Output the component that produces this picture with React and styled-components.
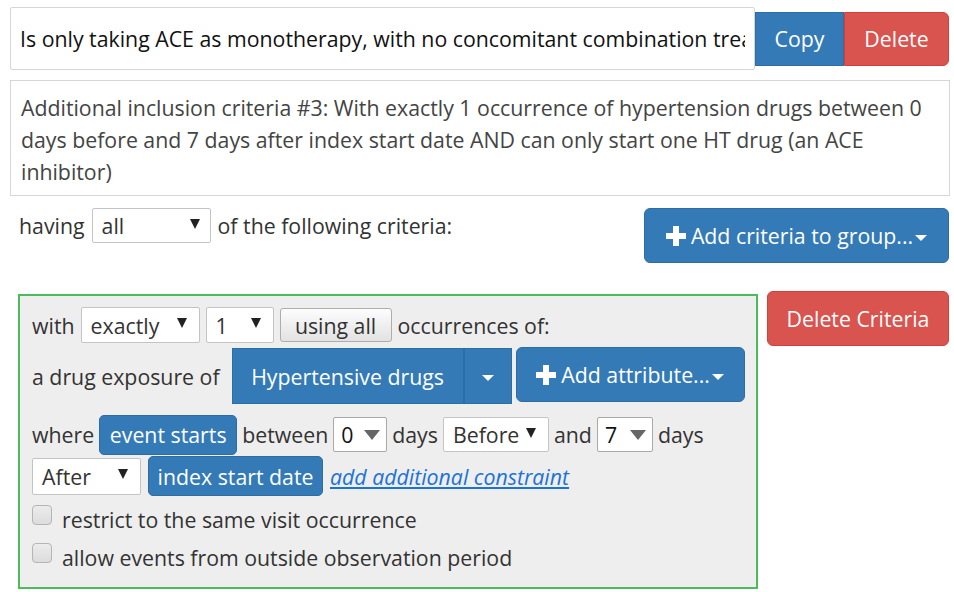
import React from 'react';
import styled, { createGlobalStyle, css } from 'styled-components';

const GlobalStyle = createGlobalStyle`
  body {
    margin: 0;
    background: #fff;
    font-family: 'Open Sans', 'Noto Sans', sans-serif;
    font-size: 21.3px;
    color: #333;
  }
`;

const Page = styled.div`
  width: 940px;
  padding: 7px 0 0 10px;
`;

const TitleRow = styled.div`
  display: flex;
  align-items: center;
`;

const TitleInput = styled.input`
  width: 745px;
  height: 63px;
  box-sizing: border-box;
  border: 1px solid #d6d6d6;
  border-radius: 2px;
  padding: 0 9px;
  margin: 0;
  font: inherit;
  color: #111;
  background: #fff;
  outline: none;
`;

const BtnGroup = styled.div`
  display: flex;
  height: 54px;
`;

const colors = {
  blue: css`
    background: #337ab7;
    border: 1px solid #2e6da4;
    color: #fff;
  `,
  red: css`
    background: #d9534f;
    border: 1px solid #d43f3a;
    color: #fff;
  `,
  plain: css`
    background: linear-gradient(#fdfdfd, #e2e2e2);
    border: 1px solid #adadad;
    color: #333;
  `,
};

const Button = styled.div`
  ${p => colors[p.$kind || 'blue']};
  box-sizing: border-box;
  flex-shrink: 0;
  display: inline-flex;
  align-items: center;
  justify-content: center;
  white-space: nowrap;
  height: ${p => p.$h || 54}px;
  width: ${p => (p.$w ? `${p.$w}px` : 'auto')};
  padding: 0 ${p => p.$px ?? 8}px;
  border-radius: ${p => p.$radius || '6px'};
`;

const DescBox = styled.div`
  margin-top: 10px;
  width: 940px;
  height: 116px;
  box-sizing: border-box;
  border: 1px solid #d6d6d6;
  padding: 11px 10px;
  line-height: 32px;
  color: #444;
`;

const HavingRow = styled.div`
  margin-top: 12px;
  display: flex;
  justify-content: space-between;
  align-items: flex-start;
`;

const Inline = styled.div`
  display: flex;
  align-items: center;
  white-space: nowrap;
  gap: ${p => p.$gap ?? 6}px;
  height: ${p => p.$h || 'auto'};
  margin-top: ${p => p.$mt || 0}px;
  margin-left: ${p => p.$ml || 0}px;

  & > span {
    flex-shrink: 0;
  }
`;

const Select = styled.div`
  box-sizing: border-box;
  flex-shrink: 0;
  width: ${p => p.$w}px;
  height: ${p => p.$h || 36}px;
  background: #fff;
  border: 1px solid ${p => (p.$grey ? '#a9a9a9' : '#c4c4c4')};
  border-radius: 2px;
  display: flex;
  align-items: center;
  justify-content: space-between;
  padding: 0 ${p => p.$pr ?? 14}px 0 ${p => p.$pl ?? 9}px;
  color: ${p => (p.$grey ? '#111' : '#333')};
`;

const BlackArrow = styled.span`
  width: 0;
  height: 0;
  border-left: 5px solid transparent;
  border-right: 5px solid transparent;
  border-top: 10px solid #222;
  margin-top: -4px;
`;

const GreyArrow = styled.span`
  width: 0;
  height: 0;
  border-left: 8px solid transparent;
  border-right: 8px solid transparent;
  border-top: 10px solid #666;
`;

const Caret = styled.span`
  display: inline-block;
  width: 0;
  height: 0;
  border-left: 6px solid transparent;
  border-right: 6px solid transparent;
  border-top: 6px solid #fff;
  margin-left: ${p => p.$ml ?? 2}px;
  margin-top: 4px;
`;

const CriteriaRow = styled.div`
  margin-top: 28px;
  display: flex;
  align-items: flex-start;
  gap: 9px;
`;

const GreenBox = styled.div`
  margin-left: 8px;
  margin-top: 3px;
  width: 740px;
  height: 295px;
  box-sizing: border-box;
  border: 2px solid #4cbb5c;
  background: #eee;
  padding: 10px 12px;
`;

const SplitBtn = styled.div`
  display: flex;
  flex-shrink: 0;
  height: 56px;
  margin-left: 8px;
`;

const Link = styled.a`
  color: #1a73d9;
  font-style: italic;
  text-decoration: underline;
`;

const CheckRow = styled.label`
  display: flex;
  align-items: flex-start;
  gap: 10px;
  height: 38px;
`;

const Check = styled.span`
  width: 20px;
  height: 20px;
  box-sizing: border-box;
  border: 1px solid #b5b5b5;
  border-radius: 4px;
  background: linear-gradient(#ececec, #dcdcdc);
`;

const CheckText = styled.span`
  margin-top: 2px;
  line-height: 26px;
`;

const Plus = () => (
  <svg width="20" height="20" viewBox="0 0 20 20" style={{ marginRight: 5 }}>
    <path d="M7 0h6v7h7v6h-7v7H7v-7H0V7h7z" fill="#fff" />
  </svg>
);

export default function App() {
  return (
    <Page>
      <GlobalStyle />
      <TitleRow>
        <TitleInput
          readOnly
          value="Is only taking ACE as monotherapy, with no concomitant combination treatment"
        />
        <BtnGroup>
          <Button $w={89} $radius="0">Copy</Button>
          <Button $kind="red" $w={105} $radius="0 6px 6px 0">Delete</Button>
        </BtnGroup>
      </TitleRow>

      <DescBox>
        Additional inclusion criteria #3: With exactly 1 occurrence of hypertension drugs between 0
        days before and 7 days after index start date AND can only start one HT drug (an ACE
        inhibitor)
      </DescBox>

      <HavingRow>
        <Inline $h="35px" $gap={7} $ml={9}>
          <span>having</span>
          <Select $w={119} $h={35} $pr={10}>all<BlackArrow /></Select>
          <span>of the following criteria:</span>
        </Inline>
        <Button $w={305} $h={55} style={{ marginRight: 1 }}>
          <Plus />Add criteria to group...<Caret />
        </Button>
      </HavingRow>

      <CriteriaRow>
        <GreenBox>
          <Inline $h="38px">
            <span>with</span>
            <Select $w={119} $pr={12}>exactly<BlackArrow /></Select>
            <Select $w={68} $pr={12}>1<BlackArrow /></Select>
            <Button $kind="plain" $w={112} $h={34} $radius="3px">using all</Button>
            <span>occurrences of:</span>
          </Inline>
          <Inline $h="58px" $mt={3} $gap={4}>
            <span>a drug exposure of</span>
            <SplitBtn>
              <Button $w={232} $h={56} $radius="0">Hypertensive drugs</Button>
              <Button $w={48} $h={56} $radius="0" $px={0}><Caret $ml={0} /></Button>
            </SplitBtn>
            <Button $w={229} $h={55} style={{ alignSelf: 'flex-start' }}>
              <Plus />Add attribute...<Caret />
            </Button>
          </Inline>
          <Inline $h="41px" $mt={9} $gap={5}>
            <span>where</span>
            <Button $w={138} $h={40} $radius="5px">event starts</Button>
            <span>between</span>
            <Select $w={54} $h={35} $grey $pl={7} $pr={6}>0<GreyArrow /></Select>
            <span>days</span>
            <Select $w={106} $h={35} $pr={12}>Before<BlackArrow /></Select>
            <span>and</span>
            <Select $w={56} $h={35} $grey $pl={7} $pr={6}>7<GreyArrow /></Select>
            <span>days</span>
          </Inline>
          <Inline $h="40px" $mt={1} $gap={7}>
            <Select $w={109} $h={37} $pr={12}>After<BlackArrow /></Select>
            <Button $w={175} $h={40} $radius="5px">index start date</Button>
            <Link href="#">add additional constraint</Link>
          </Inline>
          <div style={{ marginTop: 9 }}>
            <CheckRow><Check /><CheckText>restrict to the same visit occurrence</CheckText></CheckRow>
            <CheckRow><Check /><CheckText>allow events from outside observation period</CheckText></CheckRow>
          </div>
        </GreenBox>
        <Button $kind="red" $w={182} $h={55}>Delete Criteria</Button>
      </CriteriaRow>
    </Page>
  );
}
